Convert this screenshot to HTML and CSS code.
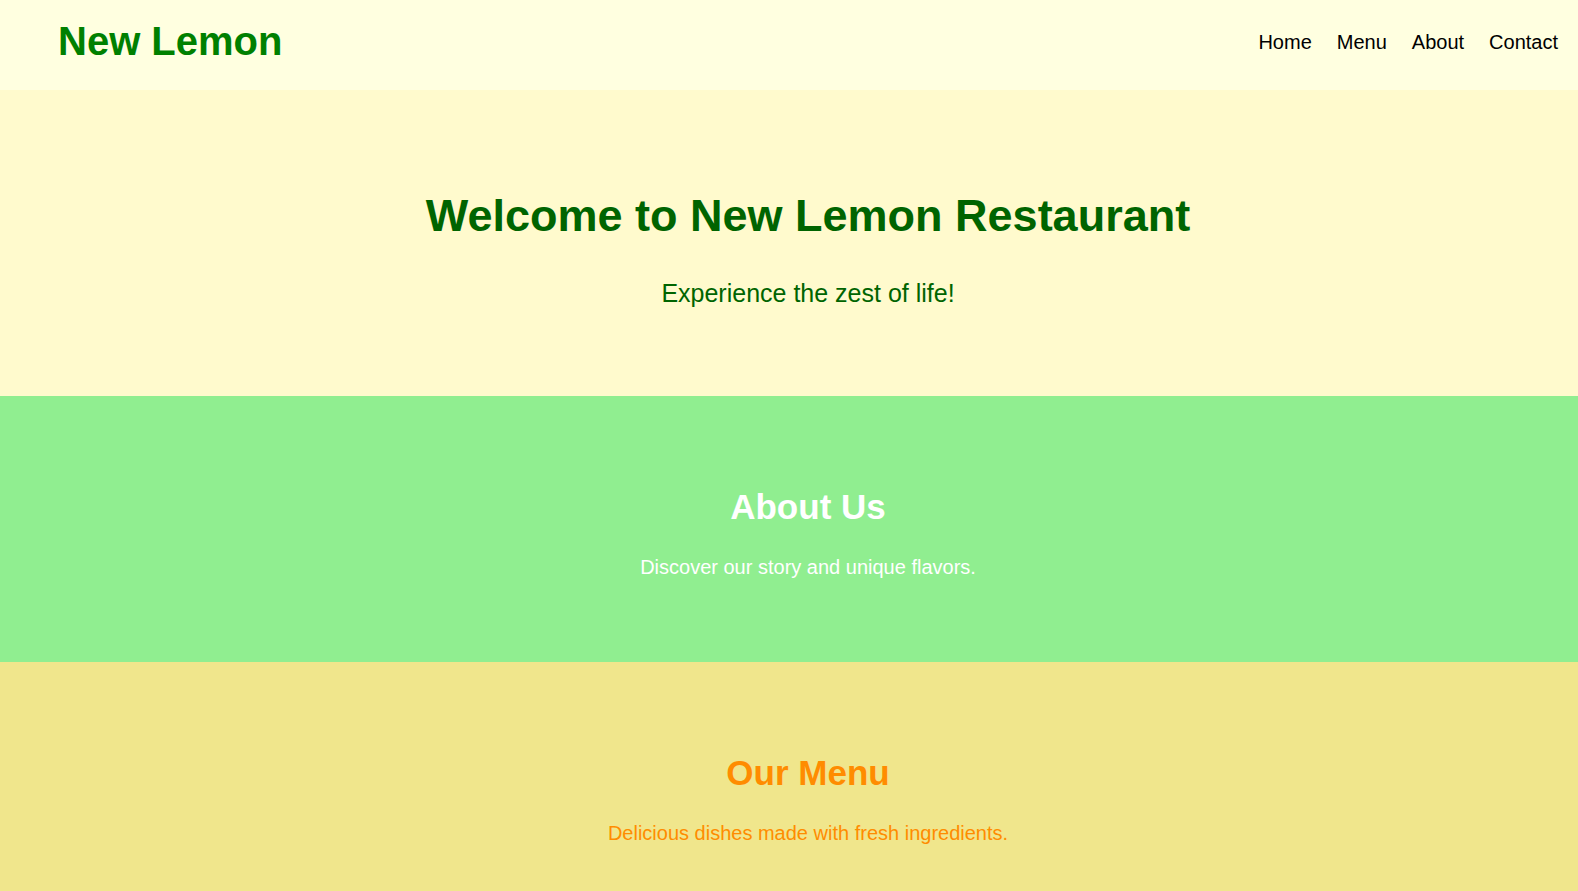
FILE: index.html
```html
<!DOCTYPE html>
<html lang="en">
<head>
<meta charset="utf-8">
<title>New Lemon Restaurant</title>
<link rel="stylesheet" href="styles.css">
</head>
<body>
<header class="site-header">
  <div class="logo">New Lemon</div>
  <nav class="nav">
    <a href="#" class="nav-link">Home</a>
    <a href="#" class="nav-link">Menu</a>
    <a href="#" class="nav-link">About</a>
    <a href="#" class="nav-link">Contact</a>
  </nav>
</header>
<section class="hero">
  <h1 class="hero-title">Welcome to New Lemon Restaurant</h1>
  <p class="hero-sub">Experience the zest of life!</p>
</section>
<section class="block about">
  <h2 class="block-title">About Us</h2>
  <p class="block-text">Discover our story and unique flavors.</p>
</section>
<section class="block menu">
  <h2 class="block-title">Our Menu</h2>
  <p class="block-text">Delicious dishes made with fresh ingredients.</p>
</section>
</body>
</html>
```
FILE: styles.css
```css
html, body {
  margin: 0;
  padding: 0;
}
body {
  font-family: "Liberation Sans", Arial, sans-serif;
  background: #f0e68c;
}
.site-header {
  display: flex;
  align-items: flex-start;
  justify-content: space-between;
  height: 90px;
  box-sizing: border-box;
  padding: 19px 20px 0 58px;
  background: #ffffe0;
}
.logo {
  font-size: 40px;
  font-weight: bold;
  color: #008000;
}
.nav {
  display: flex;
  gap: 25px;
  margin-top: 12px;
}
.nav-link {
  font-size: 20px;
  color: #000;
  text-decoration: none;
}
.hero {
  background: #fffacd;
  text-align: center;
  padding: 100px 20px 88px 58px;
}
.hero-title {
  margin: 0 0 37px;
  font-size: 45px;
  font-weight: bold;
  color: #006400;
}
.hero-sub {
  margin: 0;
  font-size: 25px;
  color: #006400;
}
.block {
  text-align: center;
  padding: 91px 20px 83px 58px;
}
.block-title {
  margin: 0 0 29px;
  font-size: 35px;
  font-weight: bold;
}
.block-text {
  margin: 0;
  font-size: 20px;
}
.about {
  background: #90ee90;
  color: #ffffff;
}
.menu {
  background: #f0e68c;
  color: #ff8c00;
}
```
